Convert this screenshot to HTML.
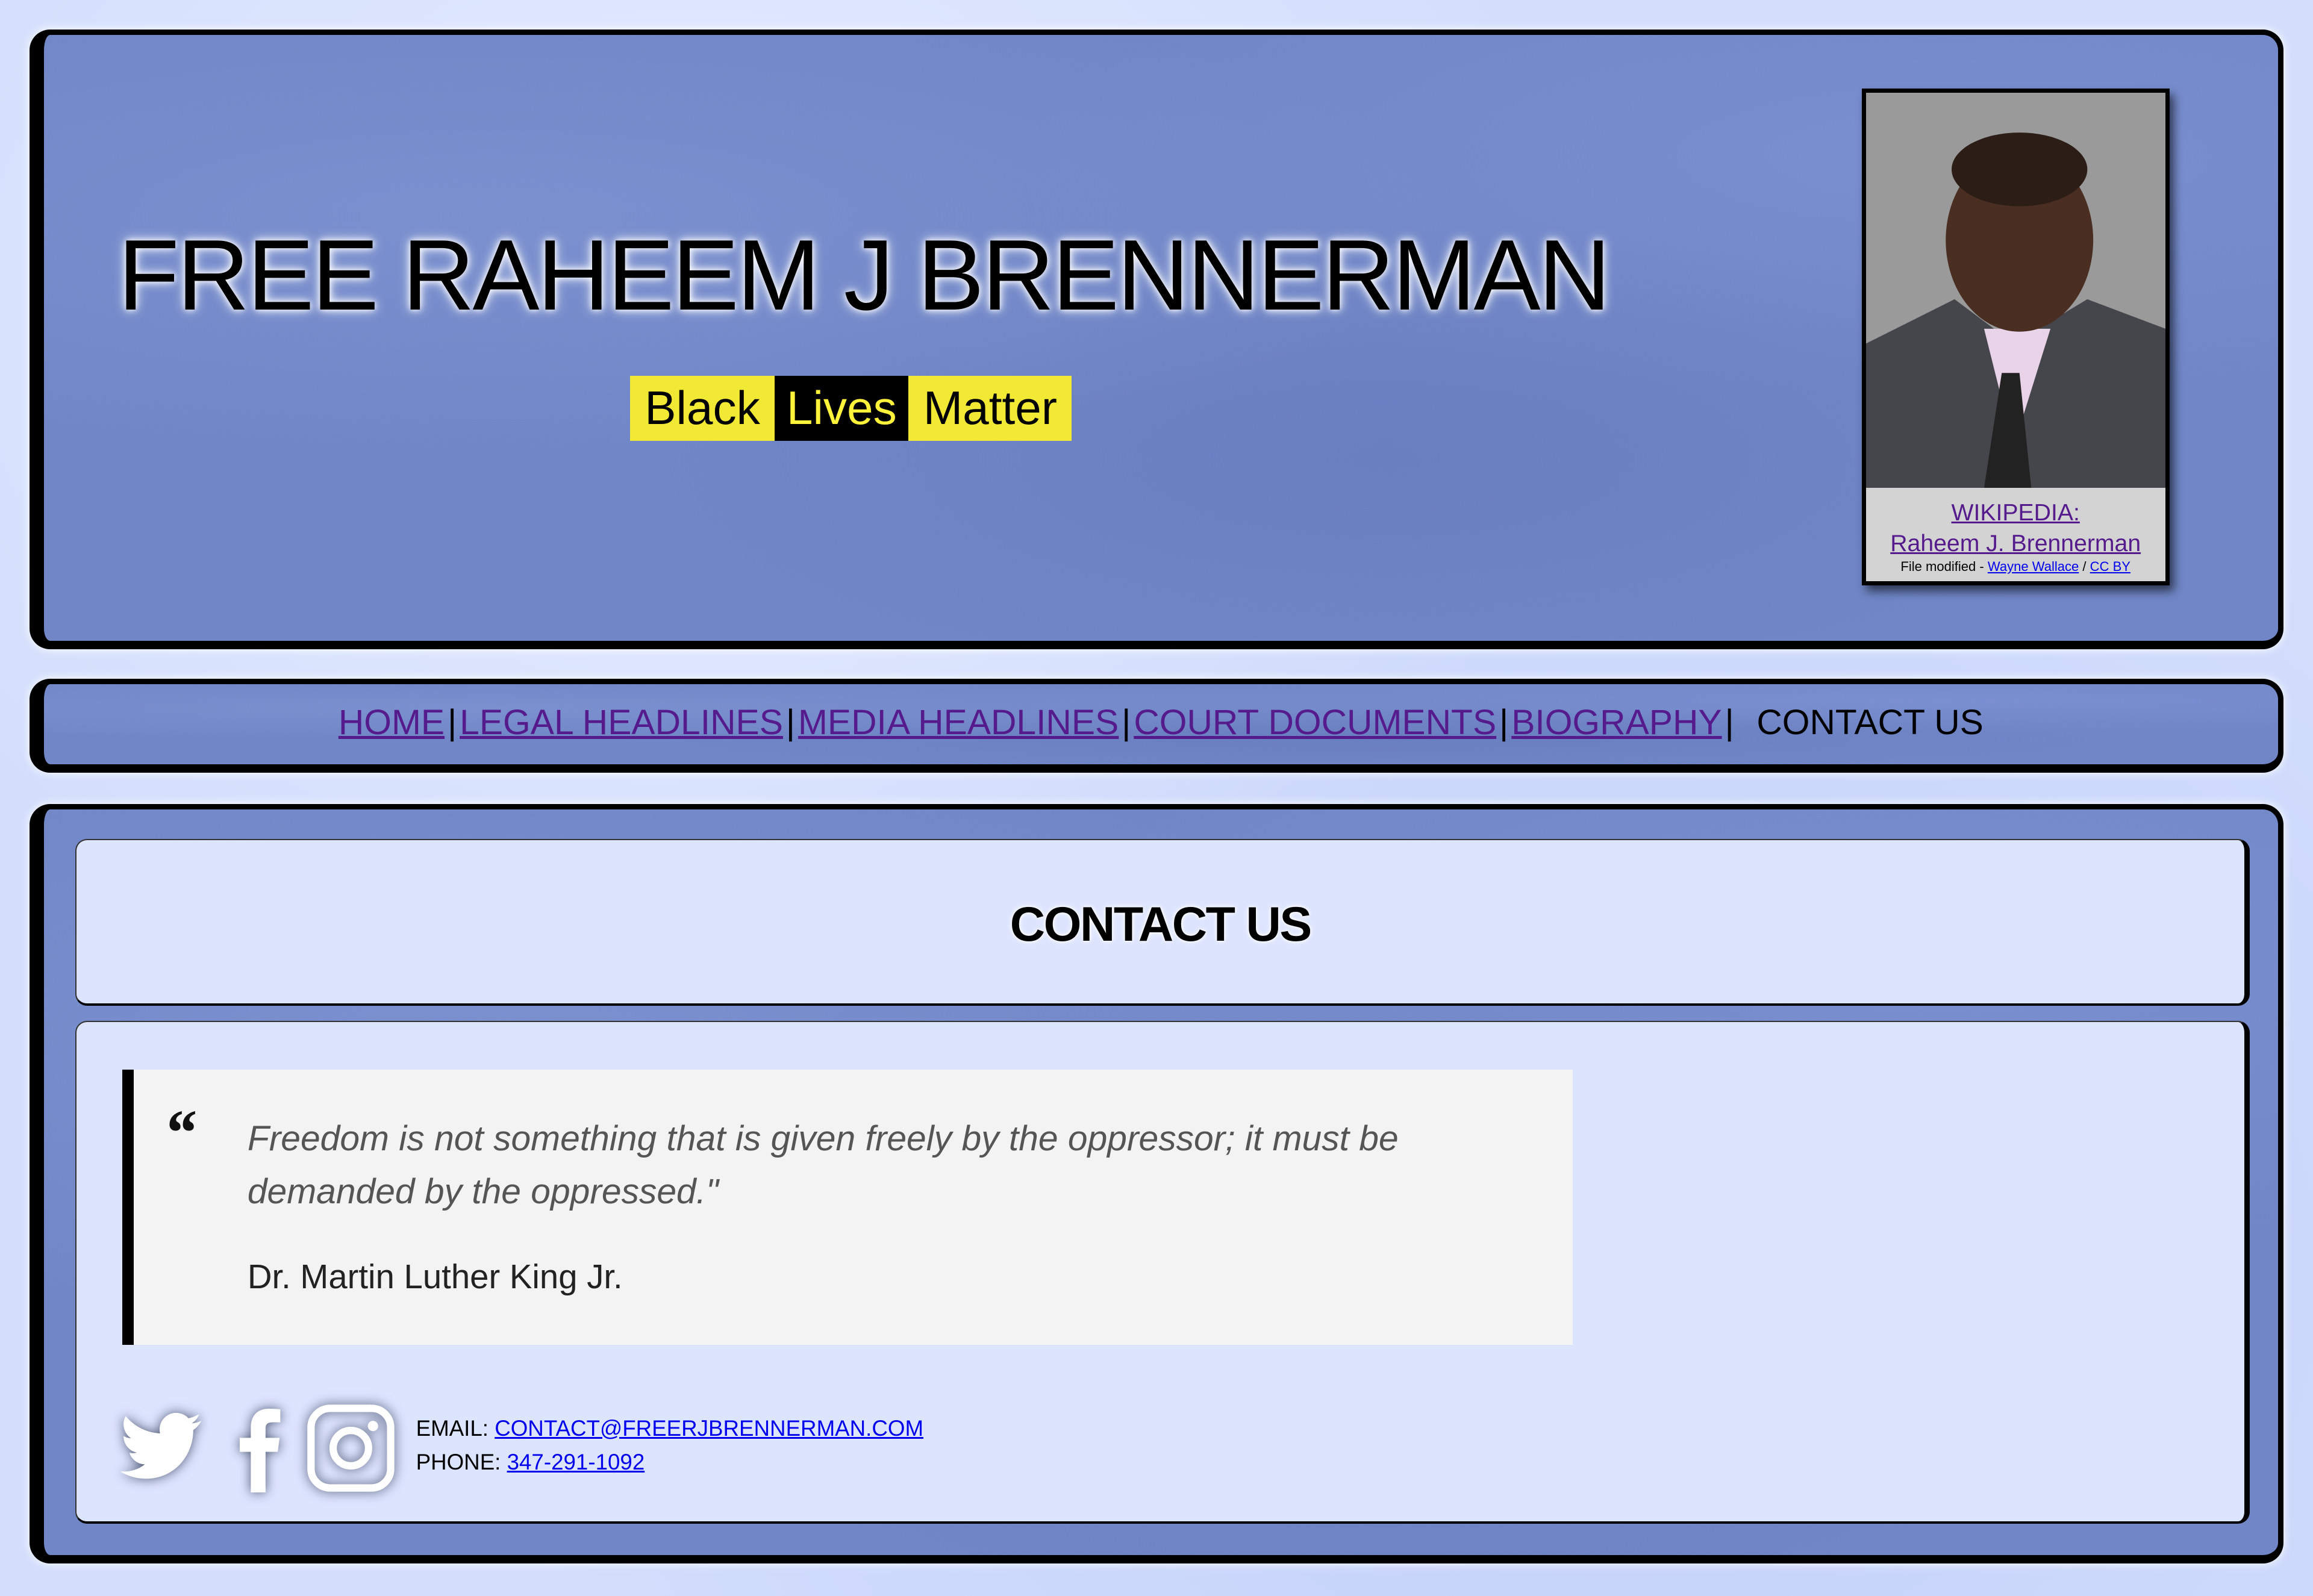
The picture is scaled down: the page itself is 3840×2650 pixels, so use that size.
<!DOCTYPE html>
<html><head><meta charset="utf-8"><style>
html,body{margin:0;padding:0}
body{width:1568px;height:1082px;zoom:2.449;overflow:hidden;font-family:"Liberation Sans",sans-serif;
background:#d3defc;background-image:radial-gradient(ellipse at 30% 20%,#e6edff 0,transparent 40%),radial-gradient(ellipse at 70% 80%,#c2d0fa 0,transparent 50%);position:relative}
.box{position:absolute;background:#7086c6;border:4px solid #000;border-left-width:10px;border-bottom-width:6px;border-radius:14px;box-sizing:border-box;
background-image:radial-gradient(ellipse at 20% 30%,#7b90cf 0,transparent 40%),radial-gradient(ellipse at 60% 70%,#6a7fc0 0,transparent 40%),radial-gradient(ellipse at 85% 20%,#7a8fd0 0,transparent 35%);box-shadow:0 0 6px #fff}
.title{position:absolute;left:80px;top:148px;font-size:68px;letter-spacing:-1.5px;color:#000;text-shadow:0 0 8px #fff,0 0 4px #fff;white-space:nowrap}
.blm{position:absolute;left:427px;top:255px;height:44px;display:flex;font-size:32px;line-height:44px}
.blm span{padding:0 10px;background:#f2e935;color:#000}
.blm span.l{background:#000;color:#fff23a;padding:0 8px}
.photo{position:absolute;left:1262px;top:60px;width:209px;height:337px;border:3px solid #000;box-sizing:border-box;box-shadow:3px 4px 6px rgba(0,0,0,.6);background:#d3d3d3}
.img{position:absolute;left:0;top:0;width:203px;height:268px;background:linear-gradient(#aaa,#888);overflow:hidden}
.cap{position:absolute;left:0;top:270px;width:203px;text-align:center;color:#551a8b}
a{color:#551a8b}
.nav{position:absolute;left:0;right:0;top:476px;text-align:center;font-size:24px;color:#000;white-space:nowrap;padding-left:6px}
.nav span{margin:0 2px}
.inner{position:absolute;background:#dde4fe;border:1px solid #333;border-right:4px solid #000;border-bottom:2px solid #000;border-radius:8px;box-sizing:border-box}
.quote{position:absolute;left:83px;top:725px;width:983px;height:187px;background:#f3f3f3;border-left:8px solid #000;box-sizing:border-box}
.ic{position:absolute;filter:drop-shadow(0 0 4px rgba(40,50,80,.8))}
</style></head><body>
<div class="box" style="left:20px;top:20px;width:1528px;height:420px"></div>
<div class="title">FREE RAHEEM J BRENNERMAN</div>
<div class="blm"><span>Black</span><span class="l">Lives</span><span>Matter</span></div>
<div class="photo">
 <div class="img">
  <svg width="203" height="268" viewBox="0 0 203 268">
   <rect width="203" height="268" fill="#9a9a9a"/>
   <path d="M0 170 L60 140 L100 170 L150 140 L203 160 L203 268 L0 268Z" fill="#45464c"/>
   <path d="M80 160 L100 240 L125 160Z" fill="#e9d3e8"/>
   <path d="M92 190 L104 190 L112 268 L80 268Z" fill="#222"/>
   <ellipse cx="104" cy="100" rx="50" ry="62" fill="#4a2e22"/>
   <ellipse cx="104" cy="52" rx="46" ry="25" fill="#2c1d16"/>
  </svg>
 </div>
 <div class="cap"><a href="#" style="font-size:16px;display:block;margin-top:6px">WIKIPEDIA:</a><a href="#" style="font-size:16px;display:block;margin-top:3px">Raheem J. Brennerman</a><div style="font-size:9px;color:#000;margin-top:1px">File modified - <a href="#" style="color:#00e">Wayne Wallace</a> / <a href="#" style="color:#00e">CC BY</a></div></div>
</div>
<div class="box" style="left:20px;top:460px;width:1528px;height:64px"></div>
<div class="nav"><a href="#">HOME</a><span>|</span><a href="#">LEGAL HEADLINES</a><span>|</span><a href="#">MEDIA HEADLINES</a><span>|</span><a href="#">COURT DOCUMENTS</a><span>|</span><a href="#">BIOGRAPHY</a><span>|</span> &nbsp;CONTACT US</div>
<div class="box" style="left:20px;top:545px;width:1528px;height:515px"></div>
<div class="inner" style="left:51px;top:569px;width:1474px;height:113px"><div style="text-align:center;font-weight:bold;font-size:33px;margin-top:38px;text-shadow:0 0 4px #fff,0 0 2px #fff;letter-spacing:-1px">CONTACT US</div></div>
<div class="inner" style="left:51px;top:692px;width:1474px;height:341px"></div>
<div class="quote">
 <div style="position:absolute;left:20px;top:18px;font-size:44px;font-style:italic;font-weight:bold;color:#111;font-family:'Liberation Serif',serif">“</div>
 <div style="position:absolute;left:77px;top:29px;font-size:24px;font-style:italic;color:#555;line-height:36px;width:820px">Freedom is not something that is given freely by the oppressor; it must be demanded by the oppressed."</div>
 <div style="position:absolute;left:77px;top:127px;font-size:23px;color:#222">Dr. Martin Luther King Jr.</div>
</div>
<svg class="ic" style="left:78px;top:952px" width="62" height="60" viewBox="0 0 24 24"><path fill="#fff" d="M23 4.6c-.8.4-1.7.6-2.6.7.9-.6 1.6-1.4 2-2.5-.9.5-1.9.9-2.9 1.1A4.5 4.5 0 0 0 11.8 8C8 7.8 4.7 6 2.5 3.300c-1.2 2.1-.5 4.7 1.4 6-.7 0-1.4-.2-2-.6 0 2.2 1.5 4.1 3.600 4.500-.7.2-1.4.2-2 .1.6 1.8 2.3 3.1 4.2 3.1A9.1 9.1 0 0 1 1 18.3 12.8 12.8 0 0 0 7.9 20.3c8.4 0 13-7 12.9-13.2.9-.6 1.6-1.4 2.2-2.5z"/></svg>
<svg class="ic" style="left:158px;top:952px" width="34" height="60" viewBox="0 0 12 24"><path fill="#fff" d="M8 24V13h3.3l.5-3.8H8V6.8C8 5.7 8.3 5 9.9 5H12V1.5C11.6 1.4 10.3 1.3 8.9 1.3 5.9 1.3 4 3.1 4 6.4v2.8H1V13h3v11z"/></svg>
<svg class="ic" style="left:208px;top:952px" width="60" height="60" viewBox="0 0 60 60"><rect x="3" y="3" width="54" height="54" rx="13" fill="none" stroke="#fff" stroke-width="5"/><circle cx="30" cy="30" r="12" fill="none" stroke="#fff" stroke-width="5"/><circle cx="45" cy="15" r="3.5" fill="#fff"/></svg>
<div style="position:absolute;left:282px;top:957px;font-size:15px;line-height:23px;color:#000">EMAIL: <a href="#" style="color:#00e">CONTACT@FREERJBRENNERMAN.COM</a><br>PHONE: <a href="#" style="color:#00e">347-291-1092</a></div>
</body></html>
